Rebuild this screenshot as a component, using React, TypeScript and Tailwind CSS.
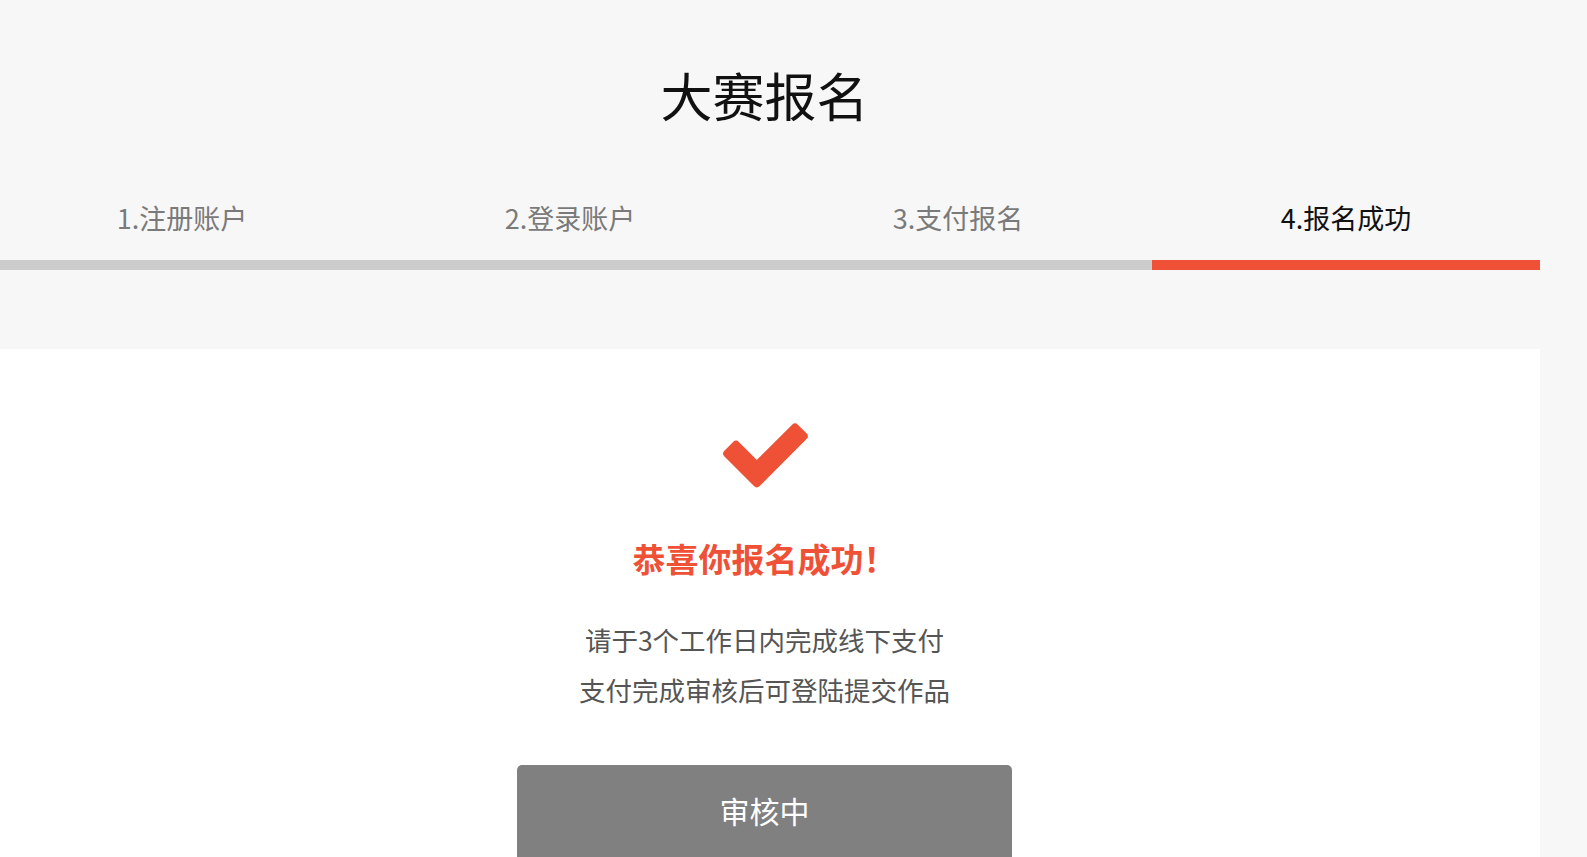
import React from "react";

const steps = ["1.注册账户", "2.登录账户", "3.支付报名", "4.报名成功"];
const current = 3;

function CheckMark() {
  return (
    <svg width="102" height="82" viewBox="0 0 100 80" className="ml-[3px]">
      <polygon
        points="12.07,39.57 20.56,31.07 41,51.5 78.43,14.07 86.9,22.57 41,68.5"
        fill="#ef5136"
        stroke="#ef5136"
        strokeWidth="8"
        strokeLinejoin="round"
      />
    </svg>
  );
}

export default function App() {
  return (
    <div className="min-h-screen bg-[#f7f7f7] font-['Noto_Sans_CJK_SC',sans-serif]">
      <div className="w-[1540px]">
        <h1 className="w-[1529px] pt-[69px] text-center text-[52px] leading-[52px] text-[#111]">
          大赛报名
        </h1>

        <div className="mt-[84px] flex w-[1552px]">
          {steps.map((s, i) => (
            <div
              key={s}
              className={
                "w-[388px] pr-[24px] text-center text-[27px] leading-[26px] " +
                (i === current ? "text-[#111]" : "text-[#7a7a7a]")
              }
            >
              {s}
            </div>
          ))}
        </div>

        <div className="mt-[29px] flex h-[10px]">
          <div className="w-[1152px] bg-[#cccccc]" />
          <div className="flex-1 bg-[#ef5136]" />
        </div>

        <div className="mt-[79px] bg-white pr-[11px]">
          <div className="flex flex-col items-center pt-[64px] pb-[40px]">
            <CheckMark />
            <p className="mt-[47px] text-[33px] leading-[33px] font-bold text-[#ef5136]">
              恭喜你报名成功！
            </p>
            <div className="mt-[40px] text-center text-[26.5px] leading-[50px] text-[#555]">
              <p>请于3个工作日内完成线下支付</p>
              <p>支付完成审核后可登陆提交作品</p>
            </div>
            <button className="mt-[50px] h-[98px] w-[495px] rounded-[5px] bg-[#808080] pb-[8px] text-[30px] text-white">
              审核中
            </button>
          </div>
        </div>
      </div>
    </div>
  );
}
